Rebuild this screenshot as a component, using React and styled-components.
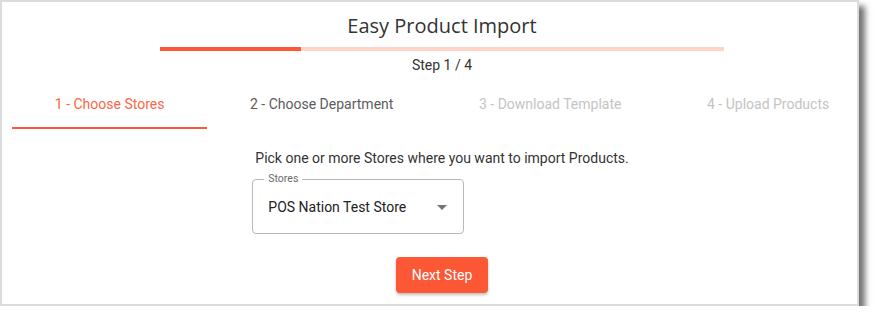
import React from "react";
import styled, { createGlobalStyle } from "styled-components";

const GlobalStyle = createGlobalStyle`
  html, body {
    margin: 0;
    padding: 0;
    background: #ffffff;
  }
  body {
    font-family: Roboto, "Liberation Sans", sans-serif;
  }
`;

const orange = "#fd5836";

const Card = styled.div`
  width: 859px;
  height: 306px;
  box-sizing: border-box;
  border: 2px solid #dcdcdc;
  background: #ffffff;
  box-shadow: 6px 6px 6px rgba(0, 0, 0, 0.55);
  overflow: hidden;
`;

const Content = styled.div`
  width: 860px;
  margin-left: 10px;
  padding-top: 10px;
  display: flex;
  flex-direction: column;
  align-items: center;
`;

const Title = styled.h1`
  margin: 0;
  font-family: "Open Sans", sans-serif;
  font-weight: 400;
  font-size: 20px;
  line-height: 28px;
  color: #333333;
`;

const Progress = styled.div`
  margin-top: 7px;
  width: 564px;
  height: 4px;
  background: #fdd3ca;
`;

const ProgressFill = styled.div`
  height: 100%;
  background: ${orange};
`;

const StepText = styled.div`
  margin-top: 4px;
  font-size: 14px;
  line-height: 20px;
  color: #333333;
`;

const Tabs = styled.div`
  margin-top: 6px;
  align-self: stretch;
  display: flex;
`;

const Tab = styled.div`
  flex: 1 1 auto;
  height: 48px;
  box-sizing: border-box;
  display: flex;
  align-items: center;
  justify-content: center;
  font-size: 14px;
  white-space: nowrap;
  color: ${(p) => (p.$active ? "#fa6646" : p.$disabled ? "#c4c4c4" : "#5c5c5c")};
  border-bottom: 2px solid ${(p) => (p.$active ? orange : "transparent")};
`;

const Body = styled.div`
  margin-top: 19px;
  display: flex;
  flex-direction: column;
  align-items: flex-start;
`;

const Hint = styled.p`
  margin: 0;
  font-size: 14px;
  line-height: 20px;
  color: #333333;
`;

const Field = styled.div`
  margin: 11px 0 0 -3px;
  width: 212px;
  height: 55px;
  box-sizing: border-box;
  border: 1px solid #b9b9b9;
  border-radius: 4px;
  padding: 0 14px 0 15px;
  display: flex;
  align-items: center;
  justify-content: space-between;
  position: relative;
`;

const Legend = styled.span`
  position: absolute;
  top: -7px;
  left: 11px;
  padding: 0 4px;
  background: #ffffff;
  font-size: 10.5px;
  line-height: 12px;
  color: #6b6b6b;
`;

const Value = styled.span`
  font-size: 14px;
  color: #222222;
  margin-top: 1px;
`;

const Caret = styled.span`
  width: 0;
  height: 0;
  border-left: 5px solid transparent;
  border-right: 5px solid transparent;
  border-top: 5px solid #757575;
  margin-right: 2px;
  margin-top: 2px;
`;

const Button = styled.button`
  margin-top: 23px;
  width: 92px;
  height: 36px;
  border: none;
  border-radius: 4px;
  background: ${orange};
  color: #ffffff;
  font-family: Roboto, sans-serif;
  font-size: 14px;
  box-shadow: 0 2px 3px rgba(0, 0, 0, 0.25);
  cursor: pointer;
`;

const steps = [
  "1 - Choose Stores",
  "2 - Choose Department",
  "3 - Download Template",
  "4 - Upload Products",
];

export default function App() {
  const current = 0;
  return (
    <>
      <GlobalStyle />
      <Card>
        <Content>
          <Title>Easy Product Import</Title>
          <Progress>
            <ProgressFill style={{ width: `${((current + 1) / steps.length) * 100}%` }} />
          </Progress>
          <StepText>
            Step {current + 1} / {steps.length}
          </StepText>
          <Tabs>
            {steps.map((s, i) => (
              <Tab key={s} $active={i === current} $disabled={i > current + 1}>
                {s}
              </Tab>
            ))}
          </Tabs>
          <Body>
            <Hint>Pick one or more Stores where you want to import Products.</Hint>
            <Field>
              <Legend>Stores</Legend>
              <Value>POS Nation Test Store</Value>
              <Caret />
            </Field>
          </Body>
          <Button>Next Step</Button>
        </Content>
      </Card>
    </>
  );
}
